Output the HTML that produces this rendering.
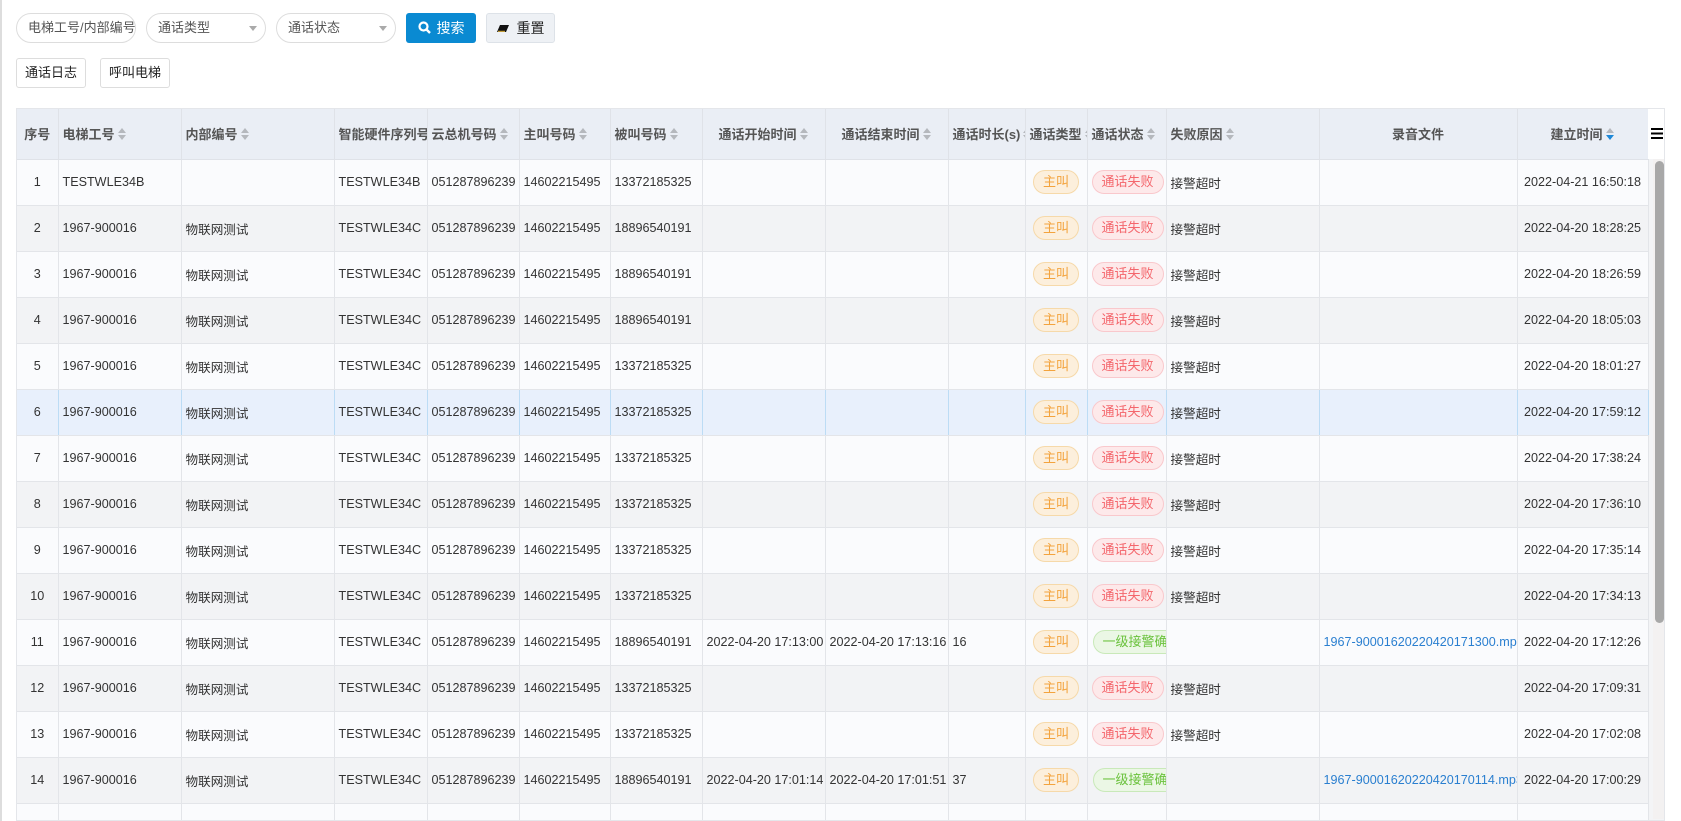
<!DOCTYPE html>
<html><head><meta charset="utf-8">
<style>
*{box-sizing:border-box;margin:0;padding:0}
body{width:1681px;height:821px;overflow:hidden;background:#fff;font-family:"Liberation Sans","Noto Sans CJK SC",sans-serif;font-size:13px;color:#333;position:relative}
.lb{position:absolute;left:0;top:0;width:2px;height:821px;background:#ddd}
.inp{position:absolute;top:13px;height:30px;border:1px solid #ddd;border-radius:15px;font-size:13px;color:#555;line-height:28px;padding-left:11px;white-space:nowrap;overflow:hidden}
.inp .ar{position:absolute;right:8px;top:12px;width:0;height:0;border-left:4px solid transparent;border-right:4px solid transparent;border-top:5px solid #aaa}
.btn{position:absolute;height:30px;border-radius:3px;line-height:30px;text-align:center;font-size:14px}
.b2{position:absolute;top:58px;height:30px;border:1px solid #ddd;border-radius:3px;line-height:28px;text-align:center;font-size:13px;color:#222;background:#fff}
.tw{position:absolute;left:16px;top:108px;width:1649px;height:713px;border:1px solid #e4e6ea;overflow:hidden;background:#f3f4f6}
table{border-collapse:collapse;table-layout:fixed;position:absolute;left:0;top:0;width:1631px}
th{height:50px;background:#eaeef5;color:#555;font-weight:bold;font-size:13px;text-align:left;padding:0 4px;border-right:1px solid #dfe2e8;border-bottom:1px solid #dfe2e8;white-space:nowrap;overflow:hidden}
td{height:46px;padding:0 4px;border-right:1px solid #e3e5e9;border-bottom:1px solid #e3e5e9;white-space:nowrap;overflow:hidden;color:#333;font-size:12.6px}
tr.o td{background:#fafbfd}
tr.e td{background:#f2f3f5}
tr.h td{background:#e8f0fc;border-right-color:#bcdcf5}
.c{text-align:center}
.s{display:inline-block;width:9px;height:12px;vertical-align:-1px;margin-left:3px;position:relative}
.s:before{content:"";position:absolute;left:0;top:0;border-left:4.5px solid transparent;border-right:4.5px solid transparent;border-bottom:5px solid #b5b8bd}
.s:after{content:"";position:absolute;left:0;top:6.5px;border-left:4.5px solid transparent;border-right:4.5px solid transparent;border-top:5px solid #b5b8bd}
.s.d:after{border-top-color:#1e88d8}
.tag{display:inline-block;height:24px;line-height:22px;border-radius:12px;padding:0 9px;font-size:13px;border:1px solid}
.t1{background:#fcefdc;border-color:#f6d9a9;color:#f3a33d}
.t2{background:#fde9ea;border-color:#f9c8cc;color:#f4666c}
.t3{background:#ebf7e5;border-color:#c9e9b9;color:#6ac23c}
a{color:#2a7fd0;text-decoration:none}
.menu{position:absolute;left:1631px;top:0;width:17px;height:50px;background:#fff}
.sb{position:absolute;left:1638px;top:52px;width:9px;height:462px;background:#a8a8a8;border-radius:5px}
.sbt{position:absolute;left:1636px;top:50px;width:13px;height:660px;background:#f3f1f1}
</style></head><body>
<div class="lb"></div>
<div class="inp" style="left:16px;width:120px">电梯工号/内部编号</div>
<div class="inp" style="left:146px;width:120px">通话类型<span class="ar"></span></div>
<div class="inp" style="left:276px;width:120px">通话状态<span class="ar"></span></div>
<div class="btn" style="left:406px;top:13px;width:70px;background:#0a8ad2;color:#fff"><svg width="13" height="13" viewBox="0 0 13 13" style="vertical-align:-1px;margin-right:6px"><circle cx="5.5" cy="5.5" r="4" fill="none" stroke="#fff" stroke-width="2.2"/><path d="M8.5 8.5L12 12" stroke="#fff" stroke-width="2.4"/></svg>搜索</div>
<div class="btn" style="left:486px;top:13px;width:69px;background:#eef1f5;border:1px solid #dde2e8;color:#222;line-height:28px"><svg width="12" height="9" viewBox="0 0 12 9" style="margin-right:8px"><path d="M3 1h9L9 8H0z" fill="#111"/><path d="M1 7.3h7" stroke="#f0c040" stroke-width="1"/></svg>重置</div>
<div class="b2" style="left:16px;width:70px">通话日志</div>
<div class="b2" style="left:100px;width:70px">呼叫电梯</div>
<div class="tw">
<table>
<colgroup><col style="width:41px"><col style="width:123px"><col style="width:153px"><col style="width:93px"><col style="width:92px"><col style="width:91px"><col style="width:92px"><col style="width:123px"><col style="width:123px"><col style="width:77px"><col style="width:62px"><col style="width:79px"><col style="width:153px"><col style="width:198px"><col style="width:131px"></colgroup>
<tr><th class="c">序号</th><th>电梯工号<i class="s"></i></th><th>内部编号<i class="s"></i></th><th>智能硬件序列号</th><th>云总机号码<i class="s"></i></th><th>主叫号码<i class="s"></i></th><th>被叫号码<i class="s"></i></th><th class="c">通话开始时间<i class="s"></i></th><th class="c">通话结束时间<i class="s"></i></th><th>通话时长(s)<i class="s"></i></th><th>通话类型<i class="s"></i></th><th>通话状态<i class="s"></i></th><th>失败原因<i class="s"></i></th><th class="c">录音文件</th><th class="c">建立时间<i class="s d"></i></th></tr>
<tr class="o"><td class="c">1</td><td>TESTWLE34B</td><td></td><td>TESTWLE34B</td><td>051287896239</td><td>14602215495</td><td>13372185325</td><td></td><td></td><td></td><td class="c"><span class="tag t1">主叫</span></td><td class="c"><span class="tag t2">通话失败</span></td><td>接警超时</td><td></td><td class="c">2022-04-21 16:50:18</td></tr>
<tr class="e"><td class="c">2</td><td>1967-900016</td><td>物联网测试</td><td>TESTWLE34C</td><td>051287896239</td><td>14602215495</td><td>18896540191</td><td></td><td></td><td></td><td class="c"><span class="tag t1">主叫</span></td><td class="c"><span class="tag t2">通话失败</span></td><td>接警超时</td><td></td><td class="c">2022-04-20 18:28:25</td></tr>
<tr class="o"><td class="c">3</td><td>1967-900016</td><td>物联网测试</td><td>TESTWLE34C</td><td>051287896239</td><td>14602215495</td><td>18896540191</td><td></td><td></td><td></td><td class="c"><span class="tag t1">主叫</span></td><td class="c"><span class="tag t2">通话失败</span></td><td>接警超时</td><td></td><td class="c">2022-04-20 18:26:59</td></tr>
<tr class="e"><td class="c">4</td><td>1967-900016</td><td>物联网测试</td><td>TESTWLE34C</td><td>051287896239</td><td>14602215495</td><td>18896540191</td><td></td><td></td><td></td><td class="c"><span class="tag t1">主叫</span></td><td class="c"><span class="tag t2">通话失败</span></td><td>接警超时</td><td></td><td class="c">2022-04-20 18:05:03</td></tr>
<tr class="o"><td class="c">5</td><td>1967-900016</td><td>物联网测试</td><td>TESTWLE34C</td><td>051287896239</td><td>14602215495</td><td>13372185325</td><td></td><td></td><td></td><td class="c"><span class="tag t1">主叫</span></td><td class="c"><span class="tag t2">通话失败</span></td><td>接警超时</td><td></td><td class="c">2022-04-20 18:01:27</td></tr>
<tr class="h"><td class="c">6</td><td>1967-900016</td><td>物联网测试</td><td>TESTWLE34C</td><td>051287896239</td><td>14602215495</td><td>13372185325</td><td></td><td></td><td></td><td class="c"><span class="tag t1">主叫</span></td><td class="c"><span class="tag t2">通话失败</span></td><td>接警超时</td><td></td><td class="c">2022-04-20 17:59:12</td></tr>
<tr class="o"><td class="c">7</td><td>1967-900016</td><td>物联网测试</td><td>TESTWLE34C</td><td>051287896239</td><td>14602215495</td><td>13372185325</td><td></td><td></td><td></td><td class="c"><span class="tag t1">主叫</span></td><td class="c"><span class="tag t2">通话失败</span></td><td>接警超时</td><td></td><td class="c">2022-04-20 17:38:24</td></tr>
<tr class="e"><td class="c">8</td><td>1967-900016</td><td>物联网测试</td><td>TESTWLE34C</td><td>051287896239</td><td>14602215495</td><td>13372185325</td><td></td><td></td><td></td><td class="c"><span class="tag t1">主叫</span></td><td class="c"><span class="tag t2">通话失败</span></td><td>接警超时</td><td></td><td class="c">2022-04-20 17:36:10</td></tr>
<tr class="o"><td class="c">9</td><td>1967-900016</td><td>物联网测试</td><td>TESTWLE34C</td><td>051287896239</td><td>14602215495</td><td>13372185325</td><td></td><td></td><td></td><td class="c"><span class="tag t1">主叫</span></td><td class="c"><span class="tag t2">通话失败</span></td><td>接警超时</td><td></td><td class="c">2022-04-20 17:35:14</td></tr>
<tr class="e"><td class="c">10</td><td>1967-900016</td><td>物联网测试</td><td>TESTWLE34C</td><td>051287896239</td><td>14602215495</td><td>13372185325</td><td></td><td></td><td></td><td class="c"><span class="tag t1">主叫</span></td><td class="c"><span class="tag t2">通话失败</span></td><td>接警超时</td><td></td><td class="c">2022-04-20 17:34:13</td></tr>
<tr class="o"><td class="c">11</td><td>1967-900016</td><td>物联网测试</td><td>TESTWLE34C</td><td>051287896239</td><td>14602215495</td><td>18896540191</td><td>2022-04-20 17:13:00</td><td>2022-04-20 17:13:16</td><td>16</td><td class="c"><span class="tag t1">主叫</span></td><td style="padding-right:0"><span class="tag t3" style="margin-left:1px">一级接警确认</span></td><td></td><td><a>1967-90001620220420171300.mp3</a></td><td class="c">2022-04-20 17:12:26</td></tr>
<tr class="e"><td class="c">12</td><td>1967-900016</td><td>物联网测试</td><td>TESTWLE34C</td><td>051287896239</td><td>14602215495</td><td>13372185325</td><td></td><td></td><td></td><td class="c"><span class="tag t1">主叫</span></td><td class="c"><span class="tag t2">通话失败</span></td><td>接警超时</td><td></td><td class="c">2022-04-20 17:09:31</td></tr>
<tr class="o"><td class="c">13</td><td>1967-900016</td><td>物联网测试</td><td>TESTWLE34C</td><td>051287896239</td><td>14602215495</td><td>13372185325</td><td></td><td></td><td></td><td class="c"><span class="tag t1">主叫</span></td><td class="c"><span class="tag t2">通话失败</span></td><td>接警超时</td><td></td><td class="c">2022-04-20 17:02:08</td></tr>
<tr class="e"><td class="c">14</td><td>1967-900016</td><td>物联网测试</td><td>TESTWLE34C</td><td>051287896239</td><td>14602215495</td><td>18896540191</td><td>2022-04-20 17:01:14</td><td>2022-04-20 17:01:51</td><td>37</td><td class="c"><span class="tag t1">主叫</span></td><td style="padding-right:0"><span class="tag t3" style="margin-left:1px">一级接警确认</span></td><td></td><td><a>1967-90001620220420170114.mp3</a></td><td class="c">2022-04-20 17:00:29</td></tr>
<tr class="o"><td style="height:10px"></td><td></td><td></td><td></td><td></td><td></td><td></td><td></td><td></td><td></td><td></td><td></td><td></td><td></td><td></td></tr>
</table>
<div class="menu"><svg width="12" height="11" viewBox="0 0 12 11" style="position:absolute;left:3px;top:19px"><rect y="0" width="12" height="2" fill="#000"/><rect y="4.5" width="12" height="2" fill="#000"/><rect y="9" width="12" height="2" fill="#000"/></svg></div>
<div class="sbt"></div>
<div class="sb"></div>
</div>
</body></html>
